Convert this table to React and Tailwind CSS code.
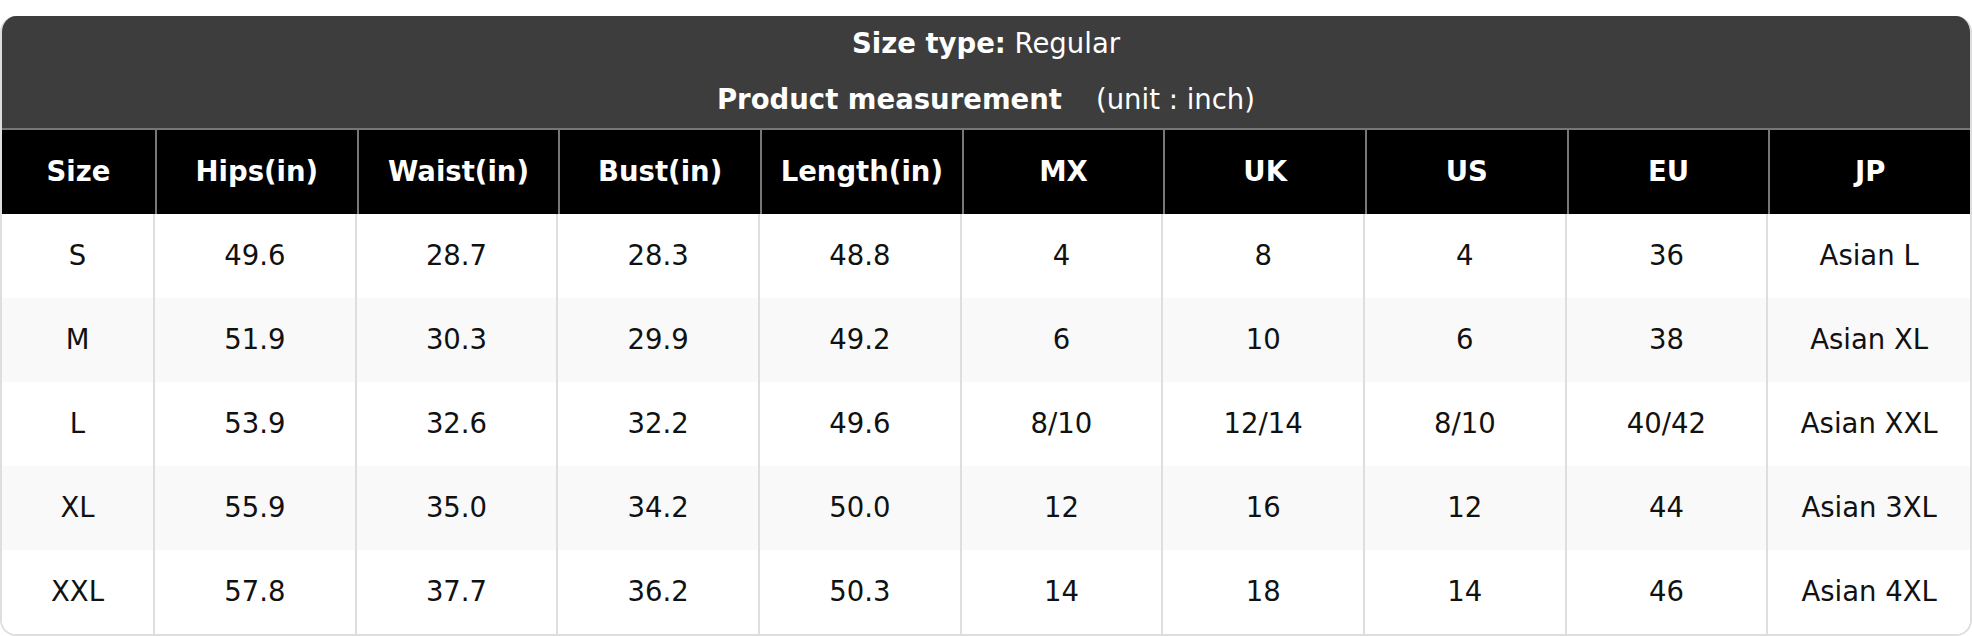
import React from "react";

const columns = ["Size", "Hips(in)", "Waist(in)", "Bust(in)", "Length(in)", "MX", "UK", "US", "EU", "JP"];

const rows = [
  ["S", "49.6", "28.7", "28.3", "48.8", "4", "8", "4", "36", "Asian L"],
  ["M", "51.9", "30.3", "29.9", "49.2", "6", "10", "6", "38", "Asian XL"],
  ["L", "53.9", "32.6", "32.2", "49.6", "8/10", "12/14", "8/10", "40/42", "Asian XXL"],
  ["XL", "55.9", "35.0", "34.2", "50.0", "12", "16", "12", "44", "Asian 3XL"],
  ["XXL", "57.8", "37.7", "36.2", "50.3", "14", "18", "14", "46", "Asian 4XL"],
];

export default function App() {
  return (
    <div className="bg-white pt-4 pb-[2px] font-['DejaVu_Sans',sans-serif] text-[27.5px]">
      <div className="rounded-2xl overflow-hidden border-2 border-t-0 border-[#dedede]">
        {/* Title band */}
        <div className="bg-[#3d3d3d] text-white -mx-[2px]">
          <div className="h-[56px] flex items-center justify-center">
            <span className="font-bold">Size type:</span>
            <span>&nbsp;Regular</span>
          </div>
          <div className="h-[56px] flex items-center justify-center">
            <span className="font-bold">Product measurement</span>
            <span className="ml-[34px]">(unit : inch)</span>
          </div>
        </div>

        {/* Column header */}
        <div className="-mx-[2px] grid grid-cols-[155px_repeat(9,1fr)] bg-black text-white font-bold border-t-2 border-l-2 border-[#777]">
          {columns.map((c) => (
            <div key={c} className="h-[84px] flex items-center justify-center border-r-2 border-[#777]">
              {c}
            </div>
          ))}
        </div>

        {/* Body rows */}
        {rows.map((r, i) => (
          <div
            key={r[0]}
            className={`grid grid-cols-[153px_repeat(9,1fr)] text-[#111] ${i % 2 === 1 ? "bg-[#f9f9f9]" : "bg-white"}`}
          >
            {r.map((v, j) => (
              <div
                key={j}
                className={`h-[84px] flex items-center justify-center ${j < 9 ? "border-r-2 border-[#dedede]" : ""}`}
              >
                {v}
              </div>
            ))}
          </div>
        ))}
      </div>
    </div>
  );
}
